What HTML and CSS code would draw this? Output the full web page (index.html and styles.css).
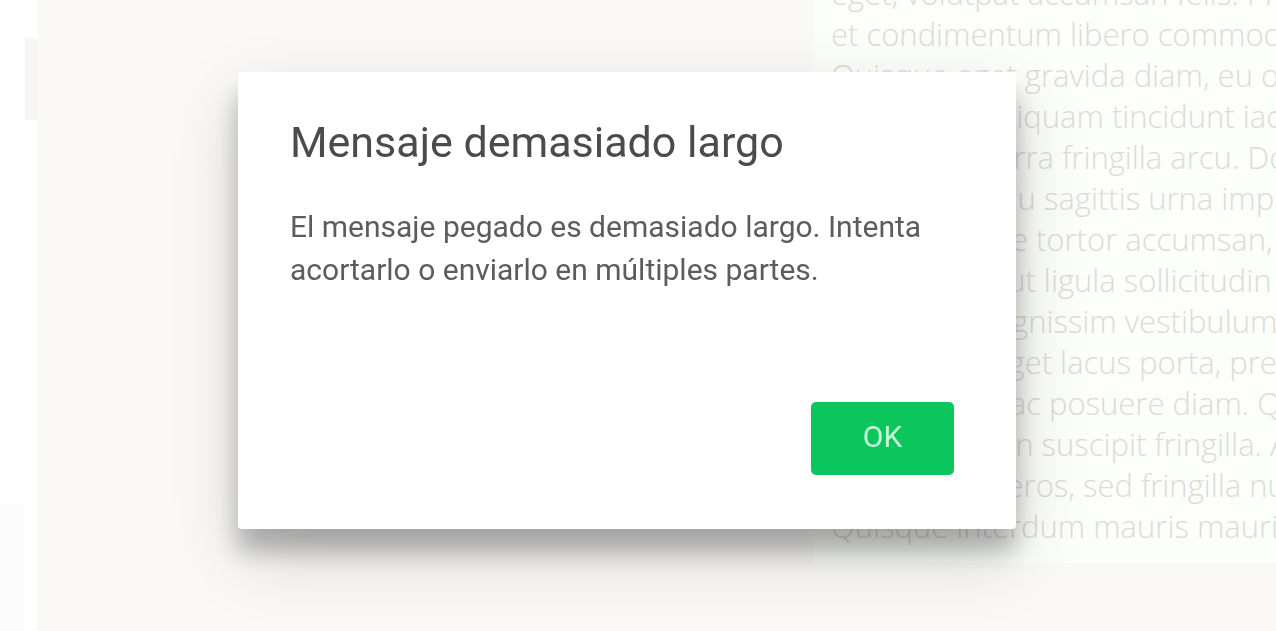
FILE: index.html
```html
<!DOCTYPE html>
<html lang="es">
<head>
<meta charset="utf-8">
<title>Mensaje demasiado largo</title>
<link rel="stylesheet" href="styles.css">
</head>
<body>
<div class="app">
  <aside class="sidebar"><div class="thumb"></div><div class="panel"></div></aside>
  <main class="chat">
    <div class="bubble">
      <p>eget, volutpat accumsan felis. Proin</p>
      <p>et condimentum libero commodo</p>
      <p>Quisque eget gravida diam, eu orci</p>
      <p>turpis urna aliquam tincidunt iaculis</p>
      <p>nulla nisi viverra fringilla arcu. Donec</p>
      <p>magna sem eu sagittis urna imperdiet</p>
      <p>id risus neque tortor accumsan, sit</p>
      <p>dolor augue ut ligula sollicitudin nec</p>
      <p>amet justo dignissim vestibulum</p>
      <p>ipsum sem eget lacus porta, pretium</p>
      <p>nulla mauris ac posuere diam. Quis</p>
      <p>lorem sed non suscipit fringilla. Aenean</p>
      <p>ipsum dolor eros, sed fringilla nunc</p>
      <p>Quisque interdum mauris mauris</p>
    </div>
  </main>
</div>
<div class="overlay">
  <div class="dialog" role="dialog" aria-modal="true" aria-labelledby="dialog-title" aria-describedby="dialog-text">
    <h1 class="title" id="dialog-title">Mensaje demasiado largo</h1>
    <p class="text" id="dialog-text">El mensaje pegado es demasiado largo. Intenta acortarlo o enviarlo en múltiples partes.</p>
    <div class="actions"><button class="ok" type="button">OK</button></div>
  </div>
</div>
</body>
</html>
```
FILE: styles.css
```css
* { box-sizing: border-box; }
html, body { height: 100%; margin: 0; overflow: hidden; }
body { background: #faf9f8; font-family: Roboto, sans-serif; }
p, h1 { margin: 0; }

.app { display: flex; height: 100%; }
.sidebar {
  display: flex;
  flex-direction: column;
  justify-content: space-between;
  width: 37px;
  padding-top: 38px;
  background: #fff;
}
.thumb { align-self: flex-end; width: 12px; height: 82px; background: #f6f6f6; }
.panel { width: 24px; height: 126px; background: #fcfcfc; }

.chat {
  flex: 1;
  display: flex;
  flex-direction: column;
  justify-content: flex-end;
  align-items: flex-end;
  min-width: 0;
  padding-bottom: 68px;
  overflow: hidden;
}
.bubble {
  flex: none;
  width: 463px;
  padding: 16px 0 16px 18px;
  overflow: hidden;
  background: #fcfef9;
  color: #dadcd8;
  font: 300 31px/41px "Open Sans", sans-serif;
  white-space: nowrap;
}

.overlay {
  position: fixed;
  inset: 0;
  display: flex;
  align-items: center;
  justify-content: center;
  padding: 0 22px 30px 0;
}
.dialog {
  width: 100%;
  max-width: 778px;
  padding: 44px 62px 54px 52px;
  border-radius: 4px;
  background: #fff;
  box-shadow: 0 22px 24px rgba(0, 0, 0, .25), 0 28px 72px rgba(0, 0, 0, .16);
}
.title { color: #4b4b4b; font-size: 43px; font-weight: 400; line-height: 52px; }
.text { padding-top: 37px; color: #5c5c5c; font-size: 30px; line-height: 43px; }
.actions { display: flex; justify-content: flex-end; padding-top: 111px; }
.ok {
  width: 143px;
  height: 73px;
  padding: 0 0 4px;
  border: 0;
  border-radius: 5px;
  background: #0bc65d;
  color: #c8f8da;
  font: 400 30px Roboto, sans-serif;
}
```
